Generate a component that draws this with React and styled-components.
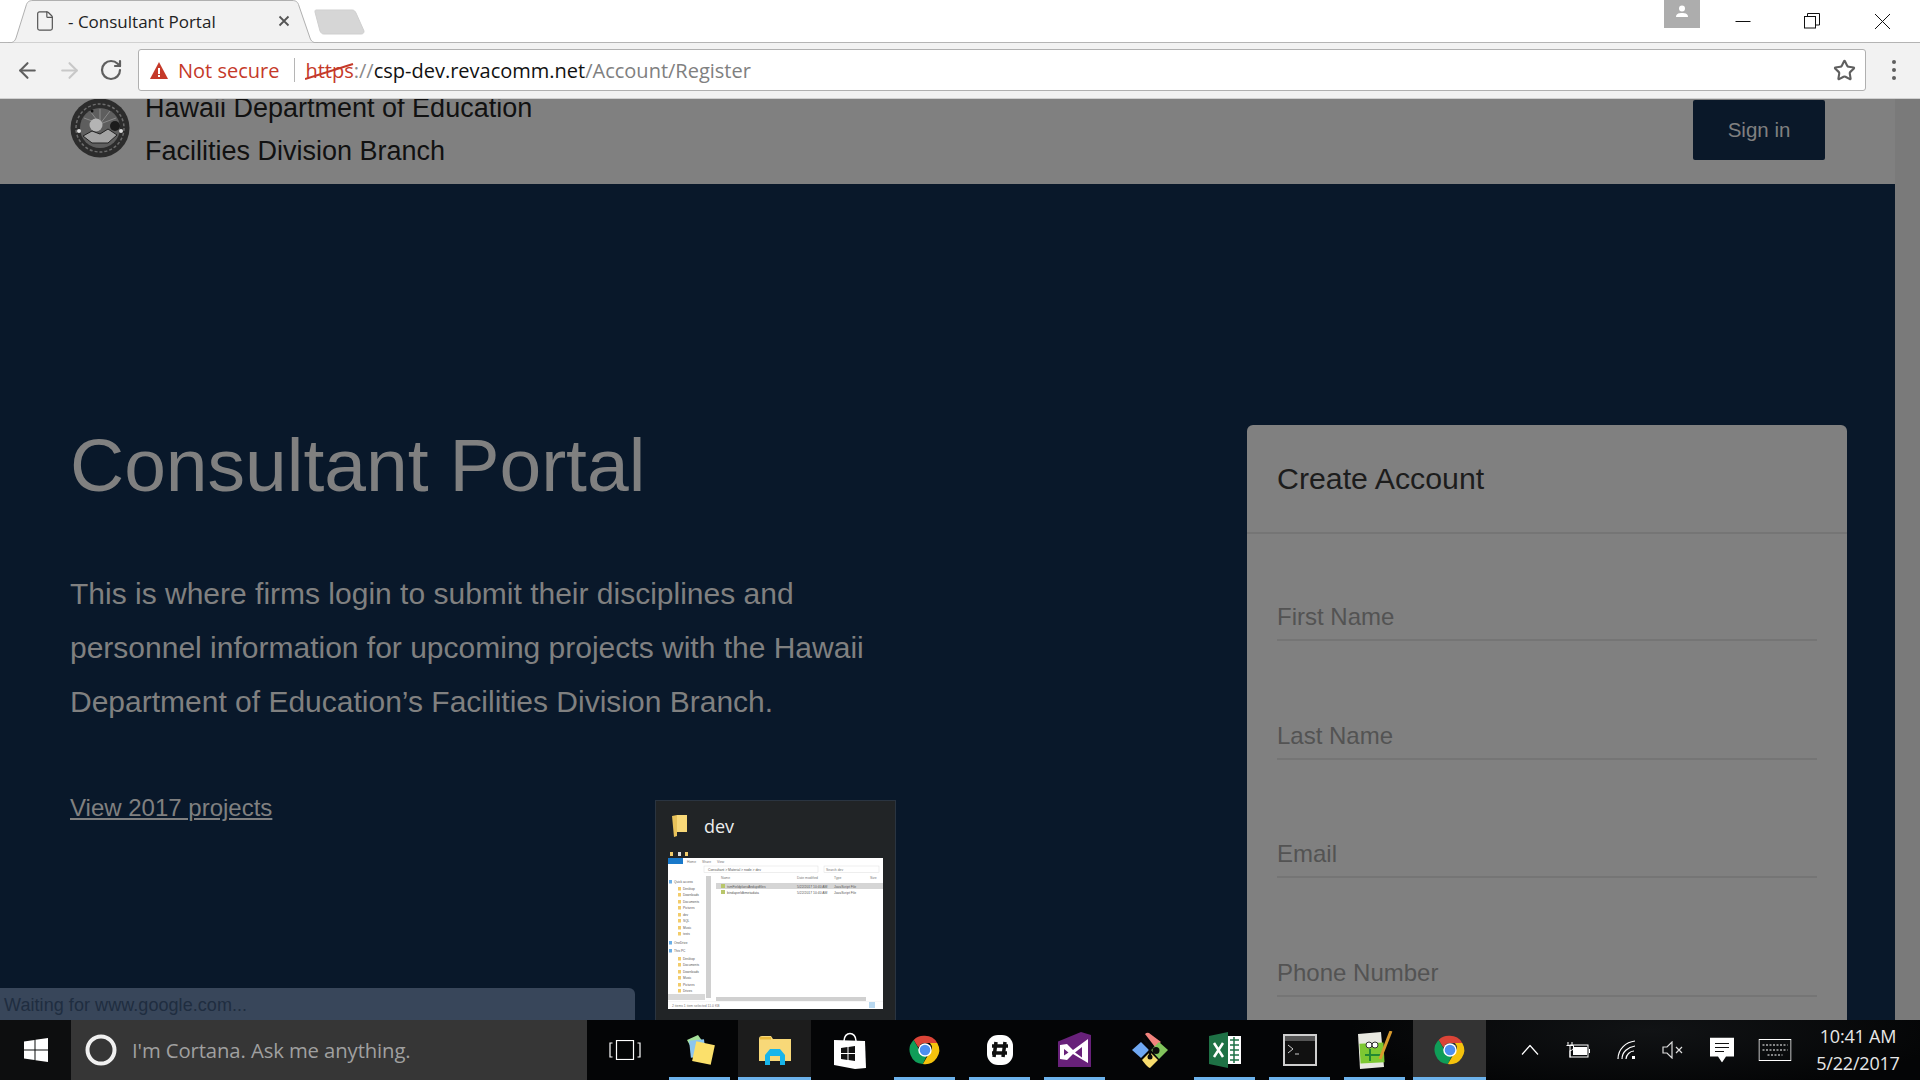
import React from 'react';
import styled, { createGlobalStyle } from 'styled-components';
import { ArrowLeft, ArrowRight, RotateCw, Star, File } from 'lucide-react';

const Global = createGlobalStyle`
  html, body { margin: 0; padding: 0; background: #000; }
  * { box-sizing: border-box; }
`;
const Screen = styled.div`
  width: 1920px; height: 1080px; display: flex; flex-direction: column; overflow: hidden;
  font-family: "Liberation Sans", Arial, sans-serif;
`;
const TabStrip = styled.div`
  height: 43px; flex: none; display: flex; background: #fff; border-bottom: 1px solid #b4b4b4;
  position: relative; padding: 0 3px 0 8px;
`;
const Tab = styled.div`
  width: 310px; height: 43px; position: relative; display: flex; align-items: center; padding: 0 0 1px 26px; z-index: 1;
  svg.shape { position: absolute; left: 0; top: 0; z-index: -1; }
`;
const TabTitle = styled.span`
  font: 17px "Open Sans", sans-serif; color: #222; margin-left: 12px; width: 210px;
`;
const NewTab = styled.svg` flex: none; margin: 9px 0 0 -4px; `;
const Spacer = styled.div` flex: 1; `;
const Profile = styled.div`
  width: 36px; height: 28px; background: #adadad; display: flex; justify-content: center; align-items: flex-start; padding-top: 5px; margin-right: 10px;
`;
const WinBtn = styled.div` width: ${p => p.$w}px; height: 42px; display: flex; align-items: center; justify-content: center; `;
const Toolbar = styled.div`
  height: 56px; flex: none; background: #f2f2f2; border-bottom: 1px solid #d0d0d0; display: flex; align-items: center; padding-bottom: 1px;
`;
const NavBtn = styled.div`
  width: 42px; display: flex; justify-content: center; color: ${p => p.$off ? '#c8c8c8' : '#5f5f5f'};
`;
const NavGroup = styled.div` display: flex; padding-left: 6px; width: 138px; `;
const Omnibox = styled.div`
  width: 1728px; height: 42px; background: #fff; border: 1px solid #b0b0b0; border-radius: 3px; display: flex; align-items: center; padding: 0 2px 0 11px;
  font: 20px "Open Sans", sans-serif;
`;
const Insecure = styled.span` color: #c53929; margin-left: 10px; white-space: nowrap; `;
const Divider = styled.span` width: 1px; height: 24px; background: #b5b5b5; margin: 0 10px 0 15px; `;
const Scheme = styled.span` color: #8a8a8a; position: relative; white-space: pre;
  svg { position: absolute; left: 0; top: 5px; }
`;
const SchemeWord = styled.span` color: #c53929; `;
const Host = styled.span` color: #111; `;
const PathPart = styled.span` color: #808080; flex: 1; `;
const StarBtn = styled.div` color: #5f5f5f; display: flex; margin-right: 7px; `;
const Menu = styled.div` width: 54px; padding-left: 2px; display: flex; flex-direction: column; align-items: center; gap: 4px; `;
const Dot = styled.i` width: 4px; height: 4px; border-radius: 50%; background: #5f5f5f; `;

const Viewport = styled.div` flex: 1; min-height: 0; display: flex; position: relative; overflow: hidden; `;
const Page = styled.div` flex: 1; display: flex; flex-direction: column; min-width: 0; `;
const Scrollbar = styled.div` width: 25px; flex: none; background: #7a7a7a; `;
const Header = styled.header`
  height: 85px; flex: none; background: #808080; display: flex; align-items: flex-start; overflow: hidden; padding: 0 70px;
`;
const Brand = styled.div` font-size: 27px; line-height: 43px; color: #111; margin: -12px 0 0 15px; flex: 1; `;
const Seal = styled.svg` flex: none; margin-top: -1px; `;
const SignIn = styled.div`
  width: 132px; height: 60px; margin-top: 1px; background: #0a1829; color: #808080; border-radius: 2px; font-size: 20.5px;
  display: flex; align-items: center; justify-content: center;
`;
const Hero = styled.main` flex: 1; min-height: 0; background: #09182a; display: flex; justify-content: space-between; padding: 241px 48px 0 70px; overflow: hidden; `;
const Intro = styled.div` width: 810px; `;
const Title = styled.h1` margin: 0; font-size: 75px; font-weight: 400; line-height: 81px; color: #808080; `;
const Lead = styled.p` margin: 61px 0 0; font-size: 30px; line-height: 54px; color: #808080; `;
const ProjLink = styled.a` display: block; margin-top: 64px; font-size: 24px; line-height: 30px; color: #808080; text-decoration: underline; `;
const Card = styled.section` width: 600px; height: 700px; background: #808080; border-radius: 6px 6px 0 0; flex: none; `;
const CardHead = styled.div` height: 109px; border-bottom: 2px solid #757575; padding: 0 30px; display: flex; align-items: center; font-size: 30.300px; color: #1c1c1c; `;
const Form = styled.div` padding: 41px 30px 0; display: flex; flex-direction: column; `;
const Field = styled.div` height: ${p => p.$h}px; flex: none; display: flex; align-items: flex-end; `;
const FieldInner = styled.div` width: 100%; height: 50px; border-bottom: 2px solid #757575; font-size: 24px; color: #535353; display: flex; align-items: center; padding-top: 4px; `;
const Status = styled.div`
  position: absolute; left: 0; bottom: 0; width: 635px; height: 32px; background: #38465a; border-top-right-radius: 6px;
  color: #1f2d40; font-size: 18px; letter-spacing: .06px; padding: 7px 0 0 4px;
`;
const Peek = styled.div`
  position: absolute; left: 655px; bottom: 0; width: 241px; height: 220px; background: #212426; border: 1px solid #2a3440; border-bottom: none;
  display: flex; flex-direction: column; padding: 13px 0 0 12px;
`;
const PeekHead = styled.div` display: flex; align-items: center; height: 23px; padding-left: 4px; color: #eee; font: 18px "Open Sans", sans-serif; gap: 17px; `;
const PeekThumb = styled.svg` margin-top: 13px; display: block; `;

const Taskbar = styled.footer`
  height: 60px; flex: none; display: flex; align-items: stretch; position: relative;
  background: radial-gradient(ellipse 300px 60px at 1650px 10px, #111315, transparent), #040506;
`;
const Start = styled.div` width: 71px; display: flex; align-items: center; justify-content: center; background: #0d0e0f; `;
const Search = styled.div` width: 516px; background: #363636; display: flex; align-items: center; padding-left: 13px; gap: 14px; font: 20.300px "Open Sans", sans-serif; color: #a0a0a0; letter-spacing: -0.1px; `;
const Item = styled.div`
  width: 75px; display: flex; align-items: center; justify-content: center; position: relative;
  ${p => p.$active && `&::before { content: ''; position: absolute; inset: 0 1px; background: ${p.$active}; }`}
  ${p => p.$run && `&::after { content: ''; position: absolute; bottom: 0; height: 3px; background: #6cb2eb; left: ${p.$active ? 1 : 7}px; right: ${p.$active ? 1 : 7}px; }`}
  svg { position: relative; z-index: 1; }
`;
const Tray = styled.div` flex: 1; display: flex; align-items: center; position: relative; `;
const TrayIcon = styled.div` position: absolute; left: ${p => p.$c}px; top: 50%; transform: translate(-50%, -50%); display: flex; `;
const Clock = styled.div` position: absolute; right: 12px; width: 100px; text-align: center; font: 18px/27px "Open Sans", sans-serif; color: #e8e8e8; letter-spacing: -0.2px; top: 3px; `;

const Chrome = () => (
  <svg width="34" height="34" viewBox="0 0 48 48">
    <path d="M24 4a20 20 0 0 1 17.3 10H24a10 10 0 0 0-9.4 6.6L8 9.8A20 20 0 0 1 24 4z" fill="#db4437" />
    <path d="M8 9.8l8.7 15.1a8 8 0 0 0 10 7L21 43.8A20 20 0 0 1 8 9.8z" fill="#0f9d58" />
    <path d="M41.3 14A20 20 0 0 1 21 43.8L29.7 29A10 10 0 0 0 31 14z" fill="#f4c20d" />
    <circle cx="24" cy="24" r="9.5" fill="#fff" />
    <circle cx="24" cy="24" r="7.5" fill="#4d8ff0" />
  </svg>
);

const Thumb = () => {
  const nav = [['Quick access', 3, 26], ['Desktop', 12, 33], ['Downloads', 12, 39], ['Documents', 12, 46], ['Pictures', 12, 52], ['dev', 12, 59], ['SQL', 12, 65], ['Music', 12, 72], ['tests', 12, 78], ['OneDrive', 3, 87], ['This PC', 3, 95], ['Desktop', 12, 103], ['Documents', 12, 109], ['Downloads', 12, 116], ['Music', 12, 122], ['Pictures', 12, 129], ['Drives', 12, 135], ['Windows', 12, 142]];
  return (
    <PeekThumb width="215" height="160" viewBox="0 -8 215 160">
      <rect x="2" y="-6" width="3" height="4" fill="#f2cc6a" /><rect x="10" y="-6" width="3" height="4" fill="#ddd" /><rect x="17" y="-6" width="3" height="4" fill="#f2cc6a" />
      <rect x="0" y="0" width="215" height="151" fill="#fff" />
      <rect x="0" y="0" width="15" height="6" fill="#1979ca" />
      <g fontFamily="Liberation Sans" fill="#777" fontSize="3.4">
        <text x="19" y="4.5">Home</text><text x="34" y="4.5">Share</text><text x="49" y="4.5">View</text>
        <text x="40" y="12.5" fill="#555">Consultant &gt; Material &gt; node &gt; dev</text>
        <text x="158" y="12.5">Search dev</text>
        <text x="53" y="21">Name</text><text x="129" y="21">Date modified</text><text x="166" y="21">Type</text><text x="202" y="21">Size</text>
      </g>
      <rect x="36" y="8" width="114" height="6.5" fill="none" stroke="#ddd" strokeWidth=".5" />
      <rect x="156" y="8" width="55" height="6.5" fill="none" stroke="#ddd" strokeWidth=".5" />
      <rect x="38" y="18" width="5" height="122" fill="#d0d0d0" />
      <rect x="48" y="25" width="167" height="6" fill="#d5d5d5" />
      <rect x="53" y="26" width="4" height="4" fill="#b8c66a" /><rect x="53" y="32" width="4" height="4" fill="#b8c66a" />
      <g fontFamily="Liberation Sans" fill="#555" fontSize="3.4">
        <text x="59" y="29.5">tsmFieldplansAndupdfiles</text><text x="59" y="35.5">bindaperldbmetadata</text>
        <text x="129" y="29.5">5/22/2017 10:40 AM</text><text x="166" y="29.5">JavaScript File</text>
        <text x="129" y="35.5">5/22/2017 10:40 AM</text><text x="166" y="35.5">JavaScript File</text>
        {nav.map(([t, x, y], i) => <text key={i} x={x + 3} y={y - 1} fontSize="3.2">{t}</text>)}
      </g>
      {nav.map(([t, x, y], i) => <rect key={i} x={x - 2} y={y - 4} width="3" height="3.5" fill={x === 3 ? '#6aaee6' : '#f2cc6a'} />)}
      <rect x="0" y="136" width="37" height="6" fill="#d8d8d8" />
      <rect x="48" y="139" width="150" height="4" fill="#d0d0d0" />
      <rect x="201" y="144" width="6" height="6" fill="#b8d8f0" />
      <rect x="0" y="143.5" width="215" height=".5" fill="#eee" />
      <text x="4" y="149" fontFamily="Liberation Sans" fill="#777" fontSize="3.4">2 items   1 item selected   11.0 KB</text>
    </PeekThumb>
  );
};

export default function App() {
  return (
    <Screen>
      <Global />
      <TabStrip>
        <Tab>
          <svg className="shape" width="310" height="43" viewBox="0 0 310 43">
            <path d="M0 43 C5 43 7 41 8 38 L18 6 C19 2 21 .5 25 .5 L284 .5 C288 .5 290 2 291 6 L302 38 C303 41 305 43 310 43 Z" fill="#f2f2f2" stroke="#b0b0b0" />
          </svg>
          <File size={22} strokeWidth={1.3} color="#555" />
          <TabTitle>- Consultant Portal</TabTitle>
          <svg width="12" height="12" viewBox="0 0 12 12"><path d="M1.500 1.500l9 9M10.500 1.500l-9 9" stroke="#555" strokeWidth="1.800" /></svg>
        </Tab>
        <NewTab width="52" height="26" viewBox="0 0 52 26">
          <path d="M2 1 L38 1 C40 1 41 2 42 4 L50 22 C50 24 49 25 47 25 L10 25 C8 25 7 24 6 22 L1 3 C1 2 1 1 2 1 Z" fill="#d6d6d6" stroke="#cfcfcf" />
        </NewTab>
        <Spacer />
        <Profile>
          <svg width="14" height="14" viewBox="0 0 14 14"><circle cx="7" cy="3.5" r="3" fill="#fff" /><path d="M1 12 C1 8.5 4 8 7 8 C10 8 13 8.500 13 12 Z" fill="#fff" /></svg>
        </Profile>
        <WinBtn $w={66}><svg width="16" height="16" viewBox="0 0 16 16"><path d="M.5 8.500h15" stroke="#111" /></svg></WinBtn>
        <WinBtn $w={72}><svg width="16" height="16" viewBox="0 0 16 16" fill="none" stroke="#111"><rect x=".5" y="3.500" width="11" height="11.500" /><path d="M3.500 3.500V.5h12v11.500h-4" /></svg></WinBtn>
        <WinBtn $w={69}><svg width="17" height="17" viewBox="0 0 17 17"><path d="M1 1l15 15M16 1L1 16" stroke="#111" /></svg></WinBtn>
      </TabStrip>
      <Toolbar>
        <NavGroup>
          <NavBtn><ArrowLeft size={25} strokeWidth={2} /></NavBtn>
          <NavBtn $off><ArrowRight size={25} strokeWidth={2} /></NavBtn>
          <NavBtn><RotateCw size={24} strokeWidth={2.2} /></NavBtn>
        </NavGroup>
        <Omnibox>
          <svg width="18" height="17" viewBox="0 0 18 17"><path d="M9 0 L18 17 H0 Z" fill="#c53929" /><rect x="8" y="6" width="2" height="6" fill="#fff" /><rect x="8" y="13" width="2" height="2" fill="#fff" /></svg>
          <Insecure>Not secure</Insecure>
          <Divider />
          <Scheme>
            <SchemeWord>https</SchemeWord>://
            <svg width="50" height="20" viewBox="0 0 50 20"><path d="M0 17 L48 2" stroke="#c53929" strokeWidth="2" /></svg>
          </Scheme>
          <Host>csp-dev.revacomm.net</Host>
          <PathPart>/Account/Register</PathPart>
          <StarBtn><Star size={23} strokeWidth={2.2} /></StarBtn>
        </Omnibox>
        <Menu><Dot /><Dot /><Dot /></Menu>
      </Toolbar>
      <Viewport>
        <Page>
          <Header>
            <Seal width="60" height="60" viewBox="0 0 60 60">
              <circle cx="30" cy="30" r="29.500" fill="#2c2c2c" />
              <circle cx="30" cy="30" r="24" fill="none" stroke="#6c6c6c" strokeWidth="1.500" strokeDasharray="3 2" />
              <circle cx="30" cy="30" r="20" fill="#5e5e5e" />
              <g stroke="#8a8a8a" strokeWidth="1"><path d="M30 26L30 11M30 26L20 13M30 26L40 13M30 26L14 20M30 26L46 20" /></g>
              <circle cx="26" cy="27" r="6.500" fill="#b4b4b4" />
              <path d="M13 38 L22 33 L30 36 L38 31 L47 37 L38 45 L22 45 Z" fill="#a4a4a4" stroke="#222" />
              <circle cx="45" cy="28" r="5" fill="#1c1c1c" /><circle cx="22" cy="13" r="1.500" fill="#111" /><circle cx="9" cy="33" r="2" fill="#ddd" /><circle cx="51" cy="33" r="2" fill="#ddd" />
            </Seal>
            <Brand>Hawaii Department of Education<br />Facilities Division Branch</Brand>
            <SignIn>Sign in</SignIn>
          </Header>
          <Hero>
            <Intro>
              <Title>Consultant Portal</Title>
              <Lead>This is where firms login to submit their disciplines and personnel information for upcoming projects with the Hawaii Department of Education’s Facilities Division Branch.</Lead>
              <ProjLink>View 2017 projects</ProjLink>
            </Intro>
            <Card>
              <CardHead>Create Account</CardHead>
              <Form>
                {['First Name', 'Last Name', 'Email', 'Phone Number'].map((t, i) => (
                  <Field key={t} $h={i === 0 ? 66 : 118.7}><FieldInner>{t}</FieldInner></Field>
                ))}
              </Form>
            </Card>
          </Hero>
        </Page>
        <Scrollbar />
        <Status>Waiting for www.google.com...</Status>
        <Peek>
          <PeekHead>
            <svg width="15" height="22" viewBox="0 0 15 22"><path d="M0 1 L5 0 V21 L2 22 Z" fill="#e8c25a" /><path d="M5 0 H15 V17 H5 Z" fill="#f8d878" /></svg>
            dev
          </PeekHead>
          <Thumb />
        </Peek>
      </Viewport>
      <Taskbar>
        <Start>
          <svg width="24" height="24" viewBox="0 0 24 24" fill="#fff"><path d="M0 3.500 L10.500 2 V11.500 H0 Z M11.500 1.800 L24 0 V11.500 H11.500 Z M0 12.500 H10.500 V22 L0 20.500 Z M11.500 12.500 H24 V24 L11.500 22.200 Z" /></svg>
        </Start>
        <Search>
          <svg width="34" height="34" viewBox="0 0 34 34"><circle cx="17" cy="17" r="13.500" fill="none" stroke="#f0f0f0" strokeWidth="4" /></svg>
          I'm Cortana. Ask me anything.
        </Search>
        <Item>
          <svg width="32" height="20" viewBox="0 0 32 20" fill="none" stroke="#fff" strokeWidth="1.200"><rect x="7.500" y=".5" width="17" height="19" /><path d="M3.500 3H1v14h2.500M28.500 3H31v14h-2.500" /></svg>
        </Item>
        <Item $run>
          <svg width="34" height="30" viewBox="0 0 34 30">
            <path d="M4 5 L15 0 L22 10 L10 16 Z" fill="#a6e29a" /><rect x="7" y="5" width="15" height="17" fill="#8ec6ee" transform="rotate(-6 14 14)" />
            <rect x="11" y="8" width="19" height="20" fill="#fbe06b" transform="rotate(12 20 18)" />
          </svg>
        </Item>
        <Item $run $active="#1c1c1c">
          <svg width="34" height="30" viewBox="0 0 34 30">
            <path d="M1 4 Q1 1 4 1 H13 L15 4 H33 V26 H1 Z" fill="#f8d878" /><rect x="2" y="2" width="11" height="2.500" fill="#e8b93c" />
            <path d="M7 30 V20 L12 14 H22 L27 20 V30 H22 V21 H12 V30 Z" fill="#18b5ea" />
          </svg>
        </Item>
        <Item>
          <svg width="34" height="38" viewBox="0 0 34 38">
            <path d="M11 10 C11 0 23 0 23 10" fill="none" stroke="#fff" strokeWidth="1.500" />
            <path d="M1 9 L32 10 L33 37 L22 38 L1 34 Z" fill="#fff" />
            <path d="M8 17 l6.500 -1 v6 H8 Z M15.500 16 l6.500 -1 v7 h-6.500 Z M8 23 h6.500 v6 L8 28 Z M15.500 23 H22 v7 l-6.500 -1 Z" fill="#111" />
          </svg>
        </Item>
        <Item $run><Chrome /></Item>
        <Item $run>
          <svg width="30" height="34" viewBox="0 0 30 34">
            <rect x="2" y="2" width="26" height="30" rx="11" fill="#fff" />
            <path d="M11 9 L9 24 M20 9 L18 24 M7 13 H23 M7 20 H22" stroke="#111" strokeWidth="3.500" fill="none" />
          </svg>
        </Item>
        <Item $run>
          <svg width="34" height="36" viewBox="0 0 34 36">
            <path d="M0 9.500 L23 0 L33 3 V35 H0 Z" fill="#68217a" />
            <path fillRule="evenodd" fill="#fff" d="M2 13 L9 12 L15 18 L30 7 V31 L15 22 L9 28 L2 27 Z M6 17 V23.500 L10.500 20.500 Z M24 15 L17 20.500 L24 25.500 Z" />
          </svg>
        </Item>
        <Item>
          <svg width="36" height="36" viewBox="0 0 36 36">
            <path d="M9 10 L17 18 L9 26 L0 18 Z" fill="#6fa8f2" />
            <path d="M13 2 Q15 0 17 1 L29 10 L23 15 Z" fill="#f2837d" />
            <path d="M27 10 L36 18 L27 27 L19 18 Z" fill="#82c45c" />
            <path d="M18 20 L26 28 L18 36 Q16 36 10 28 Z" fill="#f8dc6e" />
            <path d="M11 6 L20 17 M18 17 V26" stroke="#0a0a0a" strokeWidth="2.500" />
            <circle cx="24" cy="18.500" r="3.500" fill="#0a0a0a" /><circle cx="18" cy="25" r="2.500" fill="#0a0a0a" />
          </svg>
        </Item>
        <Item $run>
          <svg width="32" height="36" viewBox="0 0 32 36">
            <path d="M0 4 L19 0 V36 L0 32 Z" fill="#1e7145" /><rect x="19" y="4" width="13" height="28" fill="#fff" />
            <path d="M21 8h9M21 13h9M21 18h9M21 23h9M21 28h9M25 5v26" stroke="#1e7145" strokeWidth="1.500" />
            <path d="M5 11 L14 25 M14 11 L5 25" stroke="#fff" strokeWidth="2.500" />
          </svg>
        </Item>
        <Item $run>
          <svg width="34" height="32" viewBox="0 0 34 32">
            <rect x="1" y="1" width="32" height="30" fill="#111" stroke="#cfcfcf" strokeWidth="2" /><rect x="2" y="2" width="30" height="5" fill="#555" />
            <path d="M5 11 L10 15 L5 19 M12 20 H16" stroke="#ccc" strokeWidth="1" fill="none" />
          </svg>
        </Item>
        <Item $run>
          <svg width="36" height="38" viewBox="0 0 36 38">
            <path d="M1 3 L24 1 L27 36 L3 38 Z" fill="#e8e8e0" /><rect x="3" y="12" width="24" height="20" fill="#7dc832" transform="rotate(-3 15 22)" />
            <circle cx="12" cy="14" r="3" fill="#fff" stroke="#333" /><circle cx="18" cy="14" r="3" fill="#fff" stroke="#333" />
            <path d="M8 24 H24 M13 18 V30" stroke="#283" strokeWidth="2" /><path d="M34 0 L23 28" stroke="#d89a2c" strokeWidth="3" />
          </svg>
        </Item>
        <Item $run $active="#333"><Chrome /></Item>
        <Tray>
          <TrayIcon $c={43}><svg width="18" height="11" viewBox="0 0 18 11"><path d="M1 10 L9 1 L17 10" fill="none" stroke="#fff" strokeWidth="1.200" /></svg></TrayIcon>
          <TrayIcon $c={91}>
            <svg width="24" height="16" viewBox="0 0 24 16" fill="none" stroke="#fff"><path d="M2 0v3M6 0v3M.5 3.500h7v2c0 2-1.500 3-3.500 3v7" /><rect x="4" y="3" width="18" height="12" /><rect x="7" y="5" width="14" height="8" fill="#fff" stroke="none" /><path d="M23.500 7v4" /></svg>
          </TrayIcon>
          <TrayIcon $c={140}>
            <svg width="20" height="20" viewBox="0 0 20 20" fill="none" stroke="#fff" strokeWidth="1.200"><path d="M1 19C1 9 9 2 18 1M5 19C5 12 11 7 18 6M9 19C9 15 13 11 17 11" /><rect x="15" y="16" width="3" height="3" fill="#fff" stroke="none" /></svg>
          </TrayIcon>
          <TrayIcon $c={186}>
            <svg width="22" height="18" viewBox="0 0 22 18" fill="none" stroke="#ddd" strokeWidth="1.200"><path d="M1 6h4l5-5v16l-5-5H1Z" /><path d="M14 6l6 6M20 6l-6 6" /></svg>
          </TrayIcon>
          <TrayIcon $c={235}>
            <svg width="24" height="25" viewBox="0 0 24 25"><path d="M0 0H24V19H16L12 25L8 19H0Z" fill="#fff" /><path d="M5 6H19M5 10H19M5 14H14" stroke="#111" strokeWidth="1.200" /></svg>
          </TrayIcon>
          <TrayIcon $c={288}>
            <svg width="33" height="22" viewBox="0 0 33 22" fill="none" stroke="#fff"><rect x=".5" y=".5" width="32" height="21" /><path d="M4 6H29M4 11H29M9 16H24" strokeDasharray="2 1.500" /></svg>
          </TrayIcon>
          <Clock>10:41 AM<br />5/22/2017</Clock>
        </Tray>
      </Taskbar>
    </Screen>
  );
}
